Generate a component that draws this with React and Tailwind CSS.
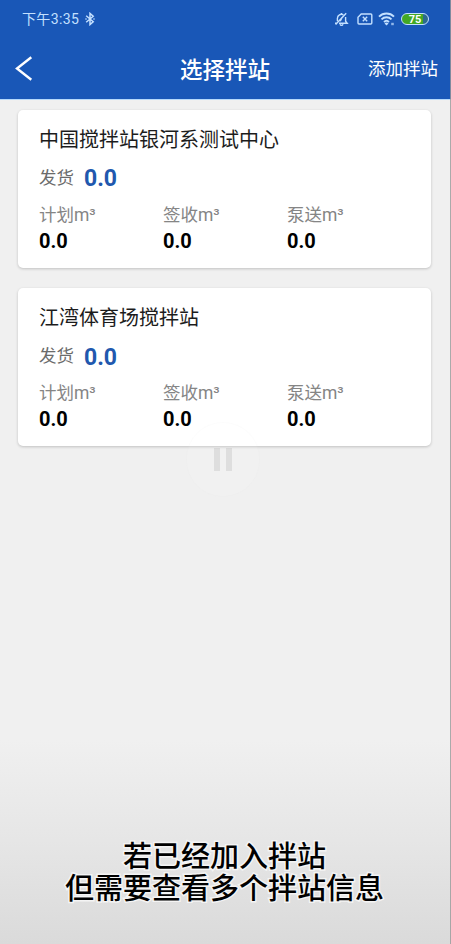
const stations = [
  { name: "中国搅拌站银河系测试中心", shipped: "0.0", planned: "0.0", signed: "0.0", pumped: "0.0" },
  { name: "江湾体育场搅拌站", shipped: "0.0", planned: "0.0", signed: "0.0", pumped: "0.0" },
];

const StatusBar = () => (
  <div className="flex h-[38px] items-center justify-between pl-[22px] pr-[22px] text-[#c3e0ff]">
    <div className="flex items-center gap-[6px]">
      <span className="text-[14px] leading-none tracking-[0.35px]">下午3:35</span>
      <svg width="10" height="14" viewBox="0 0 10 14" fill="none" stroke="currentColor" strokeWidth="1.5">
        <path d="M1.2 3.8 8.2 9.8 5 12.6V1.4L8.2 4.2 1.2 10.2" />
        <path d="M0.4 7h1.2M8.4 7h1.2" />
      </svg>
    </div>

    <div className="flex items-center">
      <svg width="15" height="15" viewBox="0 0 15 15" fill="none" stroke="currentColor" strokeWidth="1.4">
        <path d="M3.4 9.2V6.2a4 4 0 0 1 6-3.3M11.6 5v4.2l1.6 2H5M1 11.2h1.4" />
        <path d="M6 12.3a1.6 1.6 0 0 0 3 0M12.2 1.2 1.6 12.6M6.2 9.2l2-4M7.5 2V1" />
      </svg>
      <svg className="ml-[8px]" width="16" height="12" viewBox="0 0 16 12" fill="none" stroke="currentColor" strokeWidth="1.4">
        <path d="M4.2 1h9.6a1 1 0 0 1 1 1v8a1 1 0 0 1-1 1H2a1 1 0 0 1-1-1V4.2Z" />
        <path d="m5.8 3.8 4.4 4.4M10.2 3.8 5.8 8.2" />
      </svg>
      <svg className="ml-[5px]" width="18" height="14" viewBox="0 0 18 14" fill="none" stroke="currentColor" strokeWidth="1.9">
        <path d="M1 4.6a10.6 10.6 0 0 1 15 0M3.5 7.4a7 7 0 0 1 10 0M6 10a3.6 3.6 0 0 1 5 0" />
        <path d="m8.5 13.6-2-2a2.7 2.7 0 0 1 4 0Z" fill="currentColor" stroke="none" />
        <path d="M13.2 12h2.6" strokeWidth="2.4" opacity=".7" />
      </svg>
      <div className="ml-[5px] flex h-[12px] w-[28px] items-center justify-center rounded-full border-[1.5px] border-[#c3e0ff] bg-[linear-gradient(90deg,#43a824_82%,#2c6a8e_82%)] text-[11px] font-bold leading-none text-white">
        75
      </div>
    </div>
  </div>
);

const Header = () => (
  <header className="h-[100px] border-b border-[#b5d9fb] bg-[#1957b7]">
    <StatusBar />
    <div className="grid h-[61px] grid-cols-[1fr_auto_1fr] items-center pl-[13px] pr-[13px] text-white">
      <svg width="20" height="26" viewBox="0 0 20 26" fill="none" stroke="currentColor" strokeWidth="2.4">
        <path d="M18.3 1.3 4 12.5 18.3 23.7" />
      </svg>
      <h1 className="-ml-px pt-[3px] text-[22.5px] font-medium leading-none">选择拌站</h1>
      <span className="pt-[3px] text-right text-[17.5px] leading-none">添加拌站</span>
    </div>
  </header>
);

const Stat = ({ label, value }) => (
  <div className="w-[124px]">
    <p className="text-[17.5px] leading-[26px] text-[#858585]">{label}</p>
    <p className="text-[20px] font-bold leading-[26px] text-black">{value}</p>
  </div>
);

const StationCard = ({ station }) => (
  <section className="h-[158px] rounded-[5px] bg-white pl-[21px] pt-[15px] shadow-[0_1px_3px_rgba(0,0,0,0.2)]">
    <h2 className="text-[20px] leading-[30px] text-[#1c1c1c]">{station.name}</h2>
    <div className="mt-[8px] flex h-[32px] items-center gap-[10px]">
      <span className="text-[17.5px] leading-none text-[#6b6b6b]">发货</span>
      <span className="text-[23px] font-bold leading-none text-[#2158ae]">{station.shipped}</span>
    </div>
    <div className="mt-[7px] flex">
      <Stat label="计划m³" value={station.planned} />
      <Stat label="签收m³" value={station.signed} />
      <Stat label="泵送m³" value={station.pumped} />
    </div>
  </section>
);

const App = () => {
  return (
    <div className="relative h-[944px] w-[451px] overflow-hidden bg-[linear-gradient(180deg,#f0f0f0_0,#f0f0f0_740px,#e6e6e6_840px,#dadada_944px)] font-['Roboto','Noto_Sans_CJK_SC',sans-serif]">
      <Header />
      <main className="flex flex-col gap-[20.5px] pl-[18px] pr-[20px] pt-[9.5px]">
        {stations.map((station) => (
          <StationCard key={station.name} station={station} />
        ))}
      </main>

      {/* playback overlay */}
      <div className="absolute left-[186px] top-[422px] flex h-[75px] w-[74px] items-center justify-center gap-[6px] rounded-full border border-black/[0.01] bg-white/[0.1]">
        <span className="h-[23px] w-[6px] bg-black/[0.08]" />
        <span className="h-[23px] w-[6px] bg-black/[0.08]" />
      </div>
      <p className="absolute left-0 right-[2px] top-[841px] text-center text-[29px] font-medium leading-[32px] text-black [-webkit-text-stroke:3px_#f4f4f4] [paint-order:stroke_fill]">
        若已经加入拌站
        <br />
        但需要查看多个拌站信息
      </p>
      <div className="absolute inset-y-0 right-0 w-px bg-[#999]/80" />
    </div>
  );
};

export default App;
